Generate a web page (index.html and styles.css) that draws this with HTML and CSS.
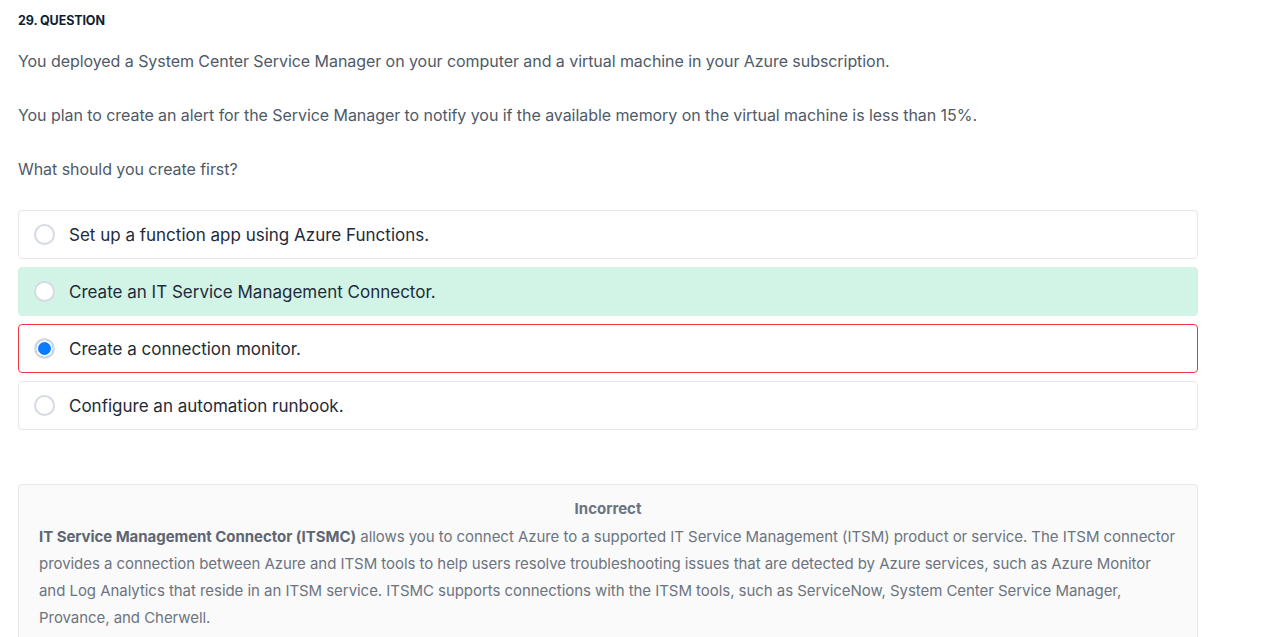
FILE: index.html
```html
<!DOCTYPE html>
<html>
<head>
<meta charset="utf-8">
<link rel="stylesheet" href="styles.css">
</head>
<body>
<div class="page">
  <div class="q-title">29. QUESTION</div>
  <p class="q-text">You deployed a System Center Service Manager on your computer and a virtual machine in your Azure subscription.</p>
  <p class="q-text">You plan to create an alert for the Service Manager to notify you if the available memory on the virtual machine is less than 15%.</p>
  <p class="q-text">What should you create first?</p>
  <div class="options">
    <label class="option"><span class="radio"></span><span class="opt-text">Set up a function app using Azure Functions.</span></label>
    <label class="option correct"><span class="radio"></span><span class="opt-text">Create an IT Service Management Connector.</span></label>
    <label class="option wrong"><span class="radio checked"></span><span class="opt-text">Create a connection monitor.</span></label>
    <label class="option"><span class="radio"></span><span class="opt-text">Configure an automation runbook.</span></label>
  </div>
  <div class="explain">
    <div class="explain-title">Incorrect</div>
    <p class="explain-text"><strong>IT Service Management Connector (ITSMC)</strong> allows you to connect Azure to a supported IT Service Management (ITSM) product or service. The ITSM connector provides a connection between Azure and ITSM tools to help users resolve troubleshooting issues that are detected by Azure services, such as Azure Monitor and Log Analytics that reside in an ITSM service. ITSMC supports connections with the ITSM tools, such as ServiceNow, System Center Service Manager, Provance, and Cherwell.</p>
  </div>
</div>
</body>
</html>
```
FILE: styles.css
```css
* { box-sizing: border-box; }
html, body { margin: 0; padding: 0; background: #fff; }
body { font-family: Inter, "Noto Sans", sans-serif; }
.page { padding: 14px 18px 0 18px; width: 1216px; }
.q-title { font-size: 12.5px; font-weight: 700; color: #0f1f33; line-height: 14px; letter-spacing: -0.1px; }
.q-text { margin: 0; font-size: 16px; letter-spacing: -0.06px; color: #4f5a68; line-height: 20px; }
.q-title + .q-text { margin-top: 23px; }
.q-text + .q-text { margin-top: 34px; }
.options { margin-top: 31px; display: flex; flex-direction: column; gap: 8px; width: 1180px; }
.option { display: flex; align-items: center; height: 49px; border: 1px solid #e6e6e6; border-radius: 4px; padding-left: 15px; background: #fff; }
.option.correct { background: #d2f4e6; border-color: #d2f4e6; }
.option.wrong { border-color: #ec3a44; }
.radio { width: 21px; height: 21px; border-radius: 50%; border: 2px solid #d6dae3; background: #fff; flex: none; }
.radio.checked { background: #0a7cff; box-shadow: inset 0 0 0 2px #fff; border-color: #d6dae3; }
.opt-text { margin-left: 14px; font-size: 17px; color: #1e2b3a; }
.explain { margin-top: 54px; width: 1180px; background: #fafafa; border: 1px solid #e8e8e8; border-radius: 4px; padding: 14px 20px 20px 20px; }
.explain-title { text-align: center; font-size: 15px; font-weight: 700; color: #6a7380; line-height: 20px; }
.explain-text { margin: 0; margin-top: 4px; font-size: 15px; letter-spacing: -0.05px; line-height: 27px; color: #6c7480; }
.explain-text strong { font-weight: 700; color: #5d6673; }
```
